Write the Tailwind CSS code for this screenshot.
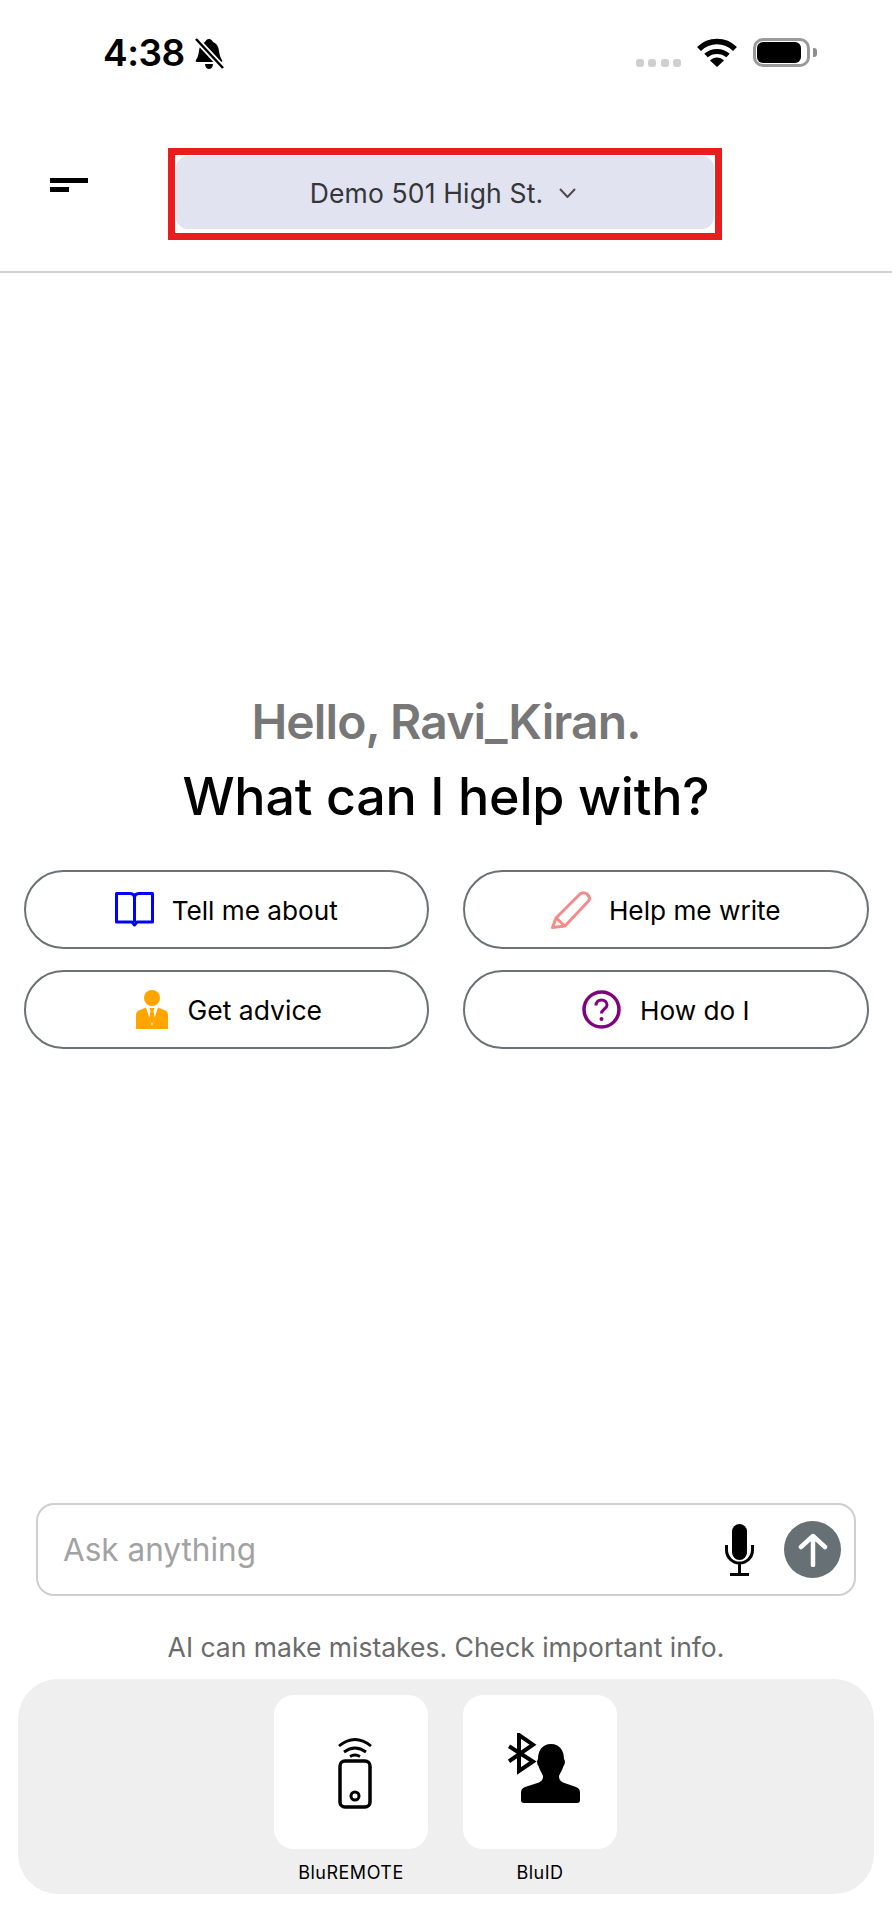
<!DOCTYPE html>
<html lang="en">
<head>
  <meta charset="UTF-8" />
  <meta name="viewport" content="width=device-width, initial-scale=1.0" />
  <title>Assistant</title>
  <script src="https://cdn.jsdelivr.net/npm/@tailwindcss/browser@4"></script>
</head>
<body class="bg-white text-black [font-family:Inter,sans-serif]">
  <div class="flex flex-col w-[892px] h-[1922px] overflow-hidden">

    <!-- Status bar -->
    <div class="flex justify-between h-[148px] pl-[103px] pr-[75px] pt-[38px]">
      <div class="flex items-start gap-[10px] h-[34px]">
        <span class="text-[37px] leading-[30px] font-semibold tracking-[-0.5px]">4:38</span>
        <svg class="w-[29px] h-[32px]" viewBox="0 0 29 32">
          <path d="M14 1c2 0 3.500 1.500 4 3 4 1.500 5.500 5 6 9 .5 4 1.500 7 3 9 .7 1 .3 2-1 2H2c-1.300 0-1.700-1-1-2 1.500-2 2.500-5 3-9 .5-4 2-7.500 6-9 .5-1.500 2-3 4-3z"/>
          <path d="M10 26h8c0 3-2 5-4 5s-4-2-4-5z"/>
          <path d="M1 1l27 29" stroke="#fff" stroke-width="6"/>
          <path d="M1 1l27 29" stroke="#000" stroke-width="2.500"/>
        </svg>
      </div>
      <div class="flex items-start">
        <div class="flex gap-[4.500px] mt-[21px]">
          <div class="w-[8px] h-[8px] rounded-[3px] bg-[#cfcfcf]"></div>
          <div class="w-[8px] h-[8px] rounded-[3px] bg-[#cfcfcf]"></div>
          <div class="w-[8px] h-[8px] rounded-[3px] bg-[#cfcfcf]"></div>
          <div class="w-[8px] h-[8px] rounded-[3px] bg-[#cfcfcf]"></div>
        </div>
        <svg class="w-[40px] h-[29px] ml-[16px]" viewBox="0 0 40 29">
          <path d="M2 11C12 1 28 1 38 11" fill="none" stroke="#000" stroke-width="5.500"/>
          <path d="M9 17.500C15 12 25 12 31 17.500" fill="none" stroke="#000" stroke-width="5"/>
          <path d="M13 22.500C17 18.500 23 18.500 27 22.500L20 29z"/>
        </svg>
        <div class="flex items-center ml-[16px]">
          <div class="w-[57px] h-[29px] border-[3px] border-[#9a9a9a] rounded-[10px] p-[1px]">
            <div class="w-[44px] h-full bg-black rounded-[6px]"></div>
          </div>
          <div class="w-[4px] h-[9px] ml-[3px] bg-[#8e8e8e] rounded-r-[3px]"></div>
        </div>
      </div>
    </div>

    <!-- Header -->
    <header class="flex items-start h-[125px] border-b-2 border-[#cfcfcf]">
      <button class="flex flex-col gap-[4px] ml-[50px] mt-[30px] w-[38px]">
        <span class="block w-[38px] h-[5px] bg-black"></span>
        <span class="block w-[19px] h-[5px] bg-black"></span>
      </button>
      <div class="ml-[80px] w-[554px] h-[92px] border-[7px] border-[#e91d1d] pl-[1px] pt-[1px] pr-[1px]">
        <div class="flex items-center justify-center gap-[16px] h-[73px] pr-[4px] bg-[#e1e4f0] rounded-[12px] text-[#36363a]">
          <span class="text-[26.500px] tracking-[0.15px] mt-[3px]">Demo 501 High St.</span>
          <svg class="w-[17px] h-[10px] mt-[1px]" viewBox="0 0 17 10"><path d="M1 1l7.500 8L16 1" fill="none" stroke="#4a4a4e" stroke-width="2"/></svg>
        </div>
      </div>
    </header>

    <!-- Greeting -->
    <main class="flex flex-col items-center mt-[421px]">
      <h2 class="text-[48px] leading-[56px] font-semibold text-[#777777] tracking-[-0.9px]">Hello, Ravi_Kiran.</h2>
      <h1 class="text-[52px] leading-[60px] font-medium mt-[17px] tracking-[-0.2px]">What can I help with?</h1>

      <div class="grid grid-cols-2 gap-x-[34px] gap-y-[21px] w-[845px] mt-[43px]">
        <button class="flex items-center justify-center gap-[18px] h-[79px] border-2 border-[#6b7275] rounded-full">
          <svg class="w-[39px] h-[35px] mb-[1px]" viewBox="0 0 39 35">
            <path d="M1.500 1.500H15Q19.500 1.500 19.500 6Q19.500 1.500 24 1.500H37.500V30H22L19.500 33L17 30H1.500Z" fill="none" stroke="#0000ff" stroke-width="3" stroke-linejoin="round"/>
            <path d="M19.500 6V30" stroke="#0000ff" stroke-width="3"/>
          </svg>
          <span class="text-[26.200px] mt-[3px]">Tell me about</span>
        </button>
        <button class="flex items-center justify-center gap-[18px] h-[79px] border-2 border-[#6b7275] rounded-full">
          <svg class="w-[40px] h-[38px]" viewBox="0 0 40 38">
            <path d="M1.500 36.500L5 27L29 3Q32.500 .5 36 3Q40 6.500 37.500 10L14 35Z" fill="none" stroke="#f58a8a" stroke-width="3" stroke-linejoin="round"/>
            <path d="M5 27L14 35" stroke="#f58a8a" stroke-width="3"/>
          </svg>
          <span class="text-[26.200px] mt-[3px]">Help me write</span>
        </button>
        <button class="flex items-center justify-center gap-[20px] h-[79px] pl-[5px] border-2 border-[#6b7275] rounded-full">
          <svg class="w-[32px] h-[39px]" viewBox="0 0 32 39">
            <circle cx="16" cy="8" r="8" fill="#ffa500"/>
            <path d="M0 39V25Q0 21 4 20L10 17.500L16 36L22 17.500L28 20Q32 21 32 25V39Z" fill="#ffa500"/>
            <path d="M13.500 18H18.500L17.500 21L19 29L16 34L13 29L14.500 21Z" fill="#ffa500"/>
          </svg>
          <span class="text-[26.500px] mt-[3px]">Get advice</span>
        </button>
        <button class="flex items-center justify-center gap-[19px] h-[79px] border-2 border-[#6b7275] rounded-full">
          <svg class="w-[39px] h-[39px]" viewBox="0 0 39 39">
            <circle cx="19.500" cy="19.500" r="17.500" fill="none" stroke="#800080" stroke-width="3.500"/>
            <path d="M14 15.500c0-3.500 2.500-5.500 5.500-5.500s5.500 2 5.500 5c0 4-5.500 4-5.500 8.500" fill="none" stroke="#800080" stroke-width="3"/>
            <circle cx="19.500" cy="29" r="2" fill="#800080"/>
          </svg>
          <span class="text-[26.200px] mt-[3px]">How do I</span>
        </button>
      </div>
    </main>

    <!-- Bottom -->
    <div class="mt-auto mb-[28px] flex flex-col">
      <div class="flex items-center h-[93px] mx-[36px] border-2 border-[#cfcfcf] rounded-[18px] pl-[25px] pr-[13px]">
        <input class="flex-1 min-w-0 text-[31.500px] outline-none placeholder:text-[#a2a2a2]" placeholder="Ask anything" />
        <svg class="w-[29px] h-[52px]" viewBox="0 0 29 52">
          <rect x="7" y="0" width="15" height="36" rx="7.500"/>
          <path d="M1.500 21v5a13 13 0 0 0 26 0v-5M14.500 39v11M5 50.500h19" fill="none" stroke="#000" stroke-width="3"/>
        </svg>
        <button class="flex items-center justify-center w-[57px] h-[57px] ml-[30px] rounded-full bg-[#667075]">
          <svg class="w-[30px] h-[34px]" viewBox="0 0 30 34">
            <path d="M15 32V3M3 14L15 3L27 14" fill="none" stroke="#fff" stroke-width="4.500" stroke-linecap="round" stroke-linejoin="round"/>
          </svg>
        </button>
      </div>
      <p class="text-center text-[26.500px] leading-[30px] text-[#6b6b6b] mt-[36px]">AI can make mistakes. Check important info.</p>

      <div class="flex gap-[35px] h-[215px] mx-[18px] mt-[17px] pl-[256px] pt-[16px] bg-[#efefef] rounded-[40px]">
        <div class="flex flex-col items-center w-[154px]">
          <div class="flex items-center justify-center w-[154px] h-[154px] bg-white rounded-[20px]">
            <svg class="w-[34px] h-[71px] ml-[8px] mt-[2px]" viewBox="0 0 34 71">
              <rect x="2" y="23" width="30" height="46" rx="5" fill="none" stroke="#000" stroke-width="3.500"/>
              <circle cx="17" cy="58" r="4" fill="none" stroke="#000" stroke-width="3"/>
              <path d="M1 8Q17 -5 33 8M6 14Q17 6 28 14M12 18.500Q17 15.500 22 18.500" fill="none" stroke="#000" stroke-width="2.800"/>
            </svg>
          </div>
          <span class="text-[18px] leading-[20px] mt-[14px] tracking-[0.5px]">BluREMOTE</span>
        </div>
        <div class="flex flex-col items-center w-[154px]">
          <div class="flex items-center justify-center w-[154px] h-[154px] bg-white rounded-[20px]">
            <svg class="w-[72px] h-[70px] ml-[8px] mb-[8px]" viewBox="0 0 72 70">
              <path d="M1 13.300L25 28.500L11 38V2L25 11.700L1 28.300" fill="none" stroke="#000" stroke-width="4"/>
              <path d="M43 11C52 11 56 18 56 26C57.500 28 57 31 55.500 33C54.500 37 52 40 51 43C51 46 52 48 55 49.500L68 54C71 55 72 57 72 60V67C72 69 71 70 69 70H16C14 70 13 69 13 67V60C13 57 14 55 17 54L31 49.500C34 48 35 46 35 43C34 40 31.500 37 30.500 33C29 31 28.500 28 30 26C30 18 34 11 43 11Z"/>
            </svg>
          </div>
          <span class="text-[18px] leading-[20px] mt-[14px] tracking-[0.5px]">BluID</span>
        </div>
      </div>
    </div>
  </div>
</body>
</html>
